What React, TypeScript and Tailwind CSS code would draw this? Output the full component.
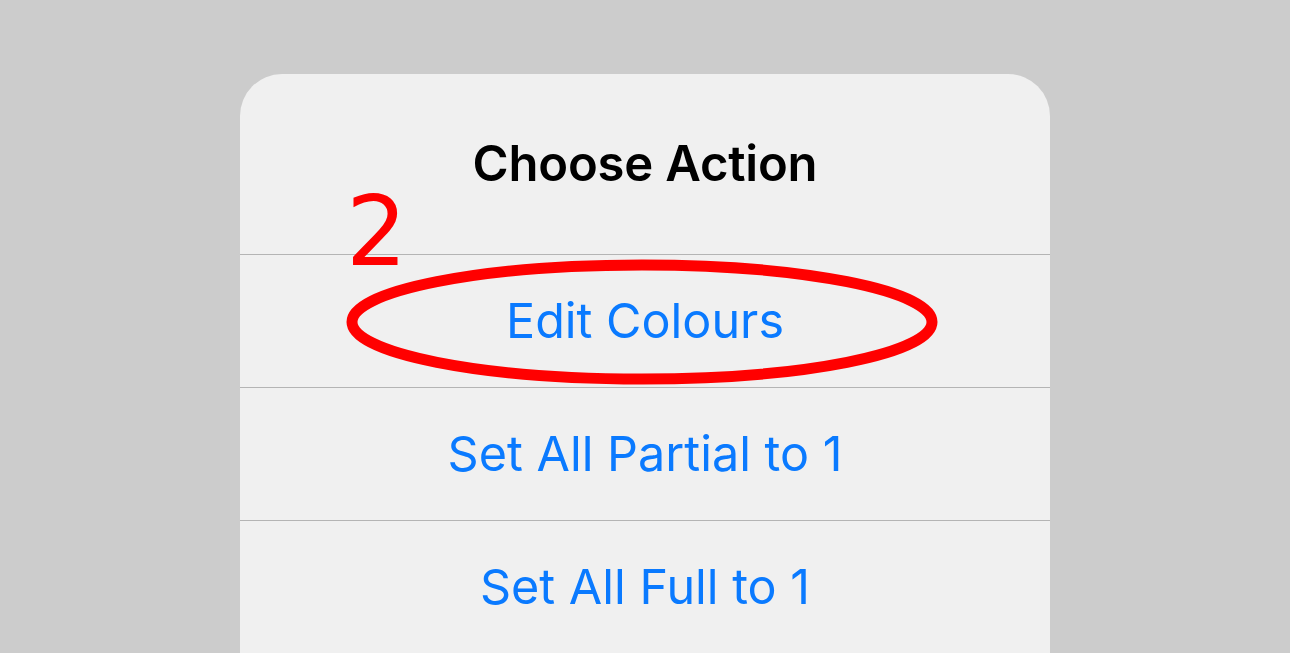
const actions = ['Edit Colours', 'Set All Partial to 1', 'Set All Full to 1']

export default function App() {
  return (
    <div className="relative h-[653px] w-full overflow-hidden bg-[#cccccc]" style={{ fontFamily: 'Inter, "Noto Sans", sans-serif' }}>
      <div className="mx-auto mt-[74px] h-[640px] w-[810px] rounded-t-[42px] bg-[#f0f0f0]">
        <div className="flex h-[180px] items-center justify-center">
          <h1 className="text-[49px] font-semibold tracking-[-0.2px] text-black">Choose Action</h1>
        </div>
        {actions.map((a) => (
          <button
            key={a}
            type="button"
            className="flex h-[133px] w-full items-center justify-center border-t border-[#b4b4b4] text-[48.5px] text-[#0a7aff]"
          >
            {a}
          </button>
        ))}
        <div className="border-t border-[#b4b4b4]" />
      </div>

      {/* annotation overlay */}
      <svg className="pointer-events-none absolute left-0 top-0" width="1290" height="653">
        <text x="346" y="265" fill="#ff0000" fontSize="96" fontFamily='"DejaVu Sans", sans-serif'>2</text>
        <ellipse cx="642" cy="322" rx="290" ry="57" fill="none" stroke="#ff0000" strokeWidth="11" />
      </svg>
    </div>
  )
}
